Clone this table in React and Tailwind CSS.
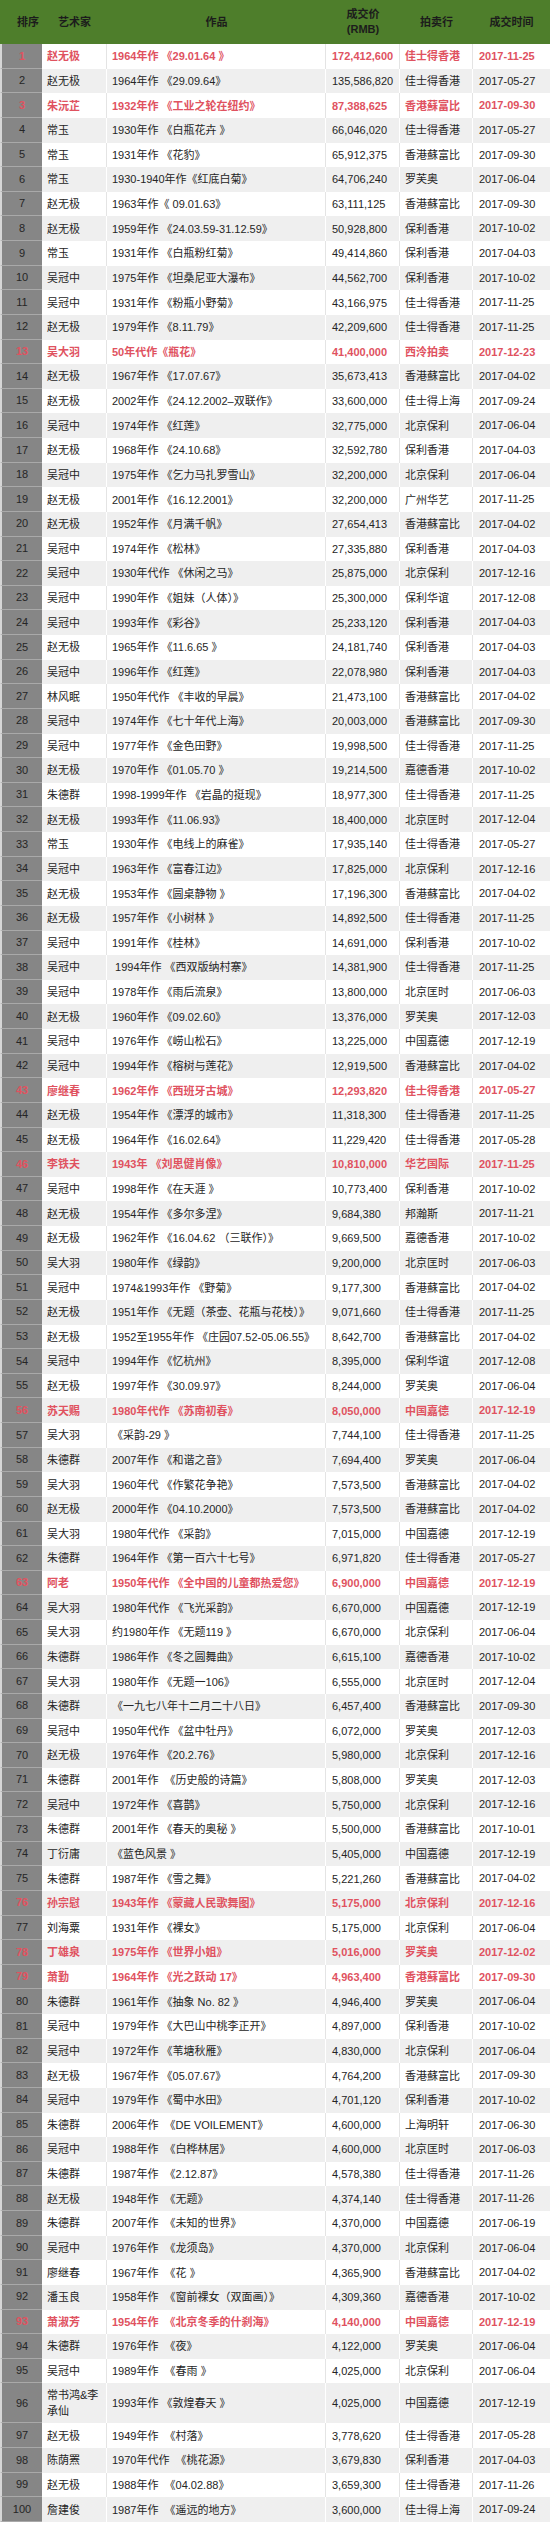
import React from 'react';

const rows = [
  ['赵无极', '1964年作 《29.01.64 》', '172,412,600', '佳士得香港', '2017-11-25', true],
  ['赵无极', '1964年作 《29.09.64》', '135,586,820', '佳士得香港', '2017-05-27'],
  ['朱沅芷', '1932年作 《工业之轮在纽约》', '87,388,625', '香港蘇富比', '2017-09-30', true],
  ['常玉', '1930年作 《白瓶花卉 》', '66,046,020', '佳士得香港', '2017-05-27'],
  ['常玉', '1931年作 《花豹》', '65,912,375', '香港蘇富比', '2017-09-30'],
  ['常玉', '1930-1940年作《红底白菊》', '64,706,240', '罗芙奥', '2017-06-04'],
  ['赵无极', '1963年作《 09.01.63》', '63,111,125', '香港蘇富比', '2017-09-30'],
  ['赵无极', '1959年作 《24.03.59-31.12.59》', '50,928,800', '保利香港', '2017-10-02'],
  ['常玉', '1931年作 《白瓶粉红菊》', '49,414,860', '保利香港', '2017-04-03'],
  ['吴冠中', '1975年作 《坦桑尼亚大瀑布》', '44,562,700', '保利香港', '2017-10-02'],
  ['吴冠中', '1931年作 《粉瓶小野菊》', '43,166,975', '佳士得香港', '2017-11-25'],
  ['赵无极', '1979年作 《8.11.79》', '42,209,600', '佳士得香港', '2017-11-25'],
  ['吴大羽', '50年代作《瓶花》', '41,400,000', '西泠拍卖', '2017-12-23', true],
  ['赵无极', '1967年作 《17.07.67》', '35,673,413', '香港蘇富比', '2017-04-02'],
  ['赵无极', '2002年作 《24.12.2002–双联作》', '33,600,000', '佳士得上海', '2017-09-24'],
  ['吴冠中', '1974年作 《红莲》', '32,775,000', '北京保利', '2017-06-04'],
  ['赵无极', '1968年作 《24.10.68》', '32,592,780', '保利香港', '2017-04-03'],
  ['吴冠中', '1975年作 《乞力马扎罗雪山》', '32,200,000', '北京保利', '2017-06-04'],
  ['赵无极', '2001年作 《16.12.2001》', '32,200,000', '广州华艺', '2017-11-25'],
  ['赵无极', '1952年作 《月满千帆》', '27,654,413', '香港蘇富比', '2017-04-02'],
  ['吴冠中', '1974年作 《松林》', '27,335,880', '保利香港', '2017-04-03'],
  ['吴冠中', '1930年代作 《休闲之马》', '25,875,000', '北京保利', '2017-12-16'],
  ['吴冠中', '1990年作 《姐妹（人体）》', '25,300,000', '保利华谊', '2017-12-08'],
  ['吴冠中', '1993年作 《彩谷》', '25,233,120', '保利香港', '2017-04-03'],
  ['赵无极', '1965年作 《11.6.65 》', '24,181,740', '保利香港', '2017-04-03'],
  ['吴冠中', '1996年作 《红莲》', '22,078,980', '保利香港', '2017-04-03'],
  ['林风眠', '1950年代作 《丰收的早晨》', '21,473,100', '香港蘇富比', '2017-04-02'],
  ['吴冠中', '1974年作 《七十年代上海》', '20,003,000', '香港蘇富比', '2017-09-30'],
  ['吴冠中', '1977年作 《金色田野》', '19,998,500', '佳士得香港', '2017-11-25'],
  ['赵无极', '1970年作 《01.05.70 》', '19,214,500', '嘉德香港', '2017-10-02'],
  ['朱德群', '1998-1999年作 《岩晶的挺现》', '18,977,300', '佳士得香港', '2017-11-25'],
  ['赵无极', '1993年作 《11.06.93》', '18,400,000', '北京匡时', '2017-12-04'],
  ['常玉', '1930年作 《电线上的麻雀》', '17,935,140', '佳士得香港', '2017-05-27'],
  ['吴冠中', '1963年作 《富春江边》', '17,825,000', '北京保利', '2017-12-16'],
  ['赵无极', '1953年作 《圆桌静物 》', '17,196,300', '香港蘇富比', '2017-04-02'],
  ['赵无极', '1957年作 《小树林 》', '14,892,500', '佳士得香港', '2017-11-25'],
  ['吴冠中', '1991年作 《桂林》', '14,691,000', '保利香港', '2017-10-02'],
  ['吴冠中', '\u00a01994年作 《西双版纳村寨》', '14,381,900', '佳士得香港', '2017-11-25'],
  ['吴冠中', '1978年作 《雨后流泉》', '13,800,000', '北京匡时', '2017-06-03'],
  ['赵无极', '1960年作 《09.02.60》', '13,376,000', '罗芙奥', '2017-12-03'],
  ['吴冠中', '1976年作 《崂山松石》', '13,225,000', '中国嘉德', '2017-12-19'],
  ['吴冠中', '1994年作 《榕树与莲花》', '12,919,500', '香港蘇富比', '2017-04-02'],
  ['廖继春', '1962年作 《西班牙古城》', '12,293,820', '佳士得香港', '2017-05-27', true],
  ['赵无极', '1954年作 《漂浮的城市》', '11,318,300', '佳士得香港', '2017-11-25'],
  ['赵无极', '1964年作 《16.02.64》', '11,229,420', '佳士得香港', '2017-05-28'],
  ['李铁夫', '1943年 《刘思健肖像》', '10,810,000', '华艺国际', '2017-11-25', true],
  ['吴冠中', '1998年作 《在天涯 》', '10,773,400', '保利香港', '2017-10-02'],
  ['赵无极', '1954年作 《多尔多涅》', '9,684,380', '邦瀚斯', '2017-11-21'],
  ['赵无极', '1962年作 《16.04.62 （三联作）》', '9,669,500', '嘉德香港', '2017-10-02'],
  ['吴大羽', '1980年作 《绿韵》', '9,200,000', '北京匡时', '2017-06-03'],
  ['吴冠中', '1974&1993年作 《野菊》', '9,177,300', '香港蘇富比', '2017-04-02'],
  ['赵无极', '1951年作 《无题（茶壶、花瓶与花枝）》', '9,071,660', '佳士得香港', '2017-11-25'],
  ['赵无极', '1952至1955年作 《庄园07.52-05.06.55》', '8,642,700', '香港蘇富比', '2017-04-02'],
  ['吴冠中', '1994年作 《忆杭州》', '8,395,000', '保利华谊', '2017-12-08'],
  ['赵无极', '1997年作 《30.09.97》', '8,244,000', '罗芙奥', '2017-06-04'],
  ['苏天赐', '1980年代作 《苏南初春》', '8,050,000', '中国嘉德', '2017-12-19', true],
  ['吴大羽', '《采韵-29 》', '7,744,100', '佳士得香港', '2017-11-25'],
  ['朱德群', '2007年作 《和谐之音》', '7,694,400', '罗芙奥', '2017-06-04'],
  ['吴大羽', '1960年代 《作繁花争艳》', '7,573,500', '香港蘇富比', '2017-04-02'],
  ['赵无极', '2000年作 《04.10.2000》', '7,573,500', '香港蘇富比', '2017-04-02'],
  ['吴大羽', '1980年代作 《采韵》', '7,015,000', '中国嘉德', '2017-12-19'],
  ['朱德群', '1964年作 《第一百六十七号》', '6,971,820', '佳士得香港', '2017-05-27'],
  ['阿老', '1950年代作 《全中国的儿童都热爱您》', '6,900,000', '中国嘉德', '2017-12-19', true],
  ['吴大羽', '1980年代作 《飞光采韵》', '6,670,000', '中国嘉德', '2017-12-19'],
  ['吴大羽', '约1980年作 《无题119 》', '6,670,000', '北京保利', '2017-06-04'],
  ['朱德群', '1986年作 《冬之圆舞曲》', '6,615,100', '嘉德香港', '2017-10-02'],
  ['吴大羽', '1980年作 《无题一106》', '6,555,000', '北京匡时', '2017-12-04'],
  ['朱德群', '《一九七八年十二月二十八日》', '6,457,400', '香港蘇富比', '2017-09-30'],
  ['吴冠中', '1950年代作 《盆中牡丹》', '6,072,000', '罗芙奥', '2017-12-03'],
  ['赵无极', '1976年作 《20.2.76》', '5,980,000', '北京保利', '2017-12-16'],
  ['朱德群', '2001年作 \u00a0《历史般的诗篇》', '5,808,000', '罗芙奥', '2017-12-03'],
  ['吴冠中', '1972年作 《喜鹊》', '5,750,000', '北京保利', '2017-12-16'],
  ['朱德群', '2001年作 《春天的奥秘 》', '5,500,000', '香港蘇富比', '2017-10-01'],
  ['丁衍庸', '《蓝色风景 》', '5,405,000', '中国嘉德', '2017-12-19'],
  ['朱德群', '1987年作 《雪之舞》', '5,221,260', '香港蘇富比', '2017-04-02'],
  ['孙宗慰', '1943年作 《蒙藏人民歌舞图》', '5,175,000', '北京保利', '2017-12-16', true],
  ['刘海粟', '1931年作 《裸女》', '5,175,000', '北京保利', '2017-06-04'],
  ['丁雄泉', '1975年作 《世界小姐》', '5,016,000', '罗芙奥', '2017-12-02', true],
  ['萧勤', '1964年作 《光之跃动 17》', '4,963,400', '香港蘇富比', '2017-09-30', true],
  ['朱德群', '1961年作 《抽象 No. 82 》', '4,946,400', '罗芙奥', '2017-06-04'],
  ['吴冠中', '1979年作 《大巴山中桃李正开》', '4,897,000', '保利香港', '2017-10-02'],
  ['吴冠中', '1972年作 《苇塘秋雁》', '4,830,000', '北京保利', '2017-06-04'],
  ['赵无极', '1967年作 《05.07.67》', '4,764,200', '香港蘇富比', '2017-09-30'],
  ['吴冠中', '1979年作 《蜀中水田》', '4,701,120', '保利香港', '2017-10-02'],
  ['朱德群', '2006年作 \u00a0《DE VOILEMENT》', '4,600,000', '上海明轩', '2017-06-30'],
  ['吴冠中', '1988年作 \u00a0《白桦林居》', '4,600,000', '北京匡时', '2017-06-03'],
  ['朱德群', '1987年作 \u00a0《2.12.87》', '4,578,380', '佳士得香港', '2017-11-26'],
  ['赵无极', '1948年作 \u00a0《无题》', '4,374,140', '佳士得香港', '2017-11-26'],
  ['朱德群', '2007年作 \u00a0《未知的世界》', '4,370,000', '中国嘉德', '2017-06-19'],
  ['吴冠中', '1976年作 \u00a0《龙须岛》', '4,370,000', '北京保利', '2017-06-04'],
  ['廖继春', '1967年作 \u00a0《花 》', '4,365,900', '香港蘇富比', '2017-04-02'],
  ['潘玉良', '1958年作 \u00a0《窗前裸女（双面画）》', '4,309,360', '嘉德香港', '2017-10-02'],
  ['萧淑芳', '1954年作 \u00a0《北京冬季的什刹海》', '4,140,000', '中国嘉德', '2017-12-19', true],
  ['朱德群', '1976年作 \u00a0《夜》', '4,122,000', '罗芙奥', '2017-06-04'],
  ['吴冠中', '1989年作 \u00a0《春雨 》', '4,025,000', '北京保利', '2017-06-04'],
  ['常书鸿&李承仙', '1993年作 《敦煌春天 》', '4,025,000', '中国嘉德', '2017-12-19'],
  ['赵无极', '1949年作 \u00a0《村落》', '3,778,620', '佳士得香港', '2017-05-28'],
  ['陈荫罴', '1970年代作 \u00a0《桃花源》', '3,679,830', '保利香港', '2017-04-03'],
  ['赵无极', '1988年作 \u00a0《04.02.88》', '3,659,300', '佳士得香港', '2017-11-26'],
  ['詹建俊', '1987年作 \u00a0《遥远的地方》', '3,600,000', '佳士得上海', '2017-09-24'],
];

const cols = 'grid grid-cols-[42px_65px_219px_74px_73px_77px]';

function Row({ index, row }) {
  const [artist, work, price, house, date, red] = row;
  const even = index % 2 === 1;
  const bg = even ? 'bg-[#efefef]' : 'bg-white';
  const line = even ? 'border-white' : 'border-[#e4e4e4]';
  const text = red ? 'text-[#e0525f] font-bold' : 'text-[#252525]';
  const cell = `flex items-center border-r ${line} py-[4px] leading-[16px]`;

  return (
    <div className={`${cols} min-h-[24.63px] ${bg} ${text}`}>
      <div className="flex items-center justify-center bg-[#868686] border-l-2 border-l-[#d6d6d6] border-b border-b-[#a9a9a9]">
        {index + 1}
      </div>
      <div className={`${cell} pl-[5px] pr-[4px]`}>{artist}</div>
      <div className={`${cell} pl-[5px] whitespace-nowrap`}>{work}</div>
      <div className={`${cell} pl-[6px] whitespace-nowrap`}>{price}</div>
      <div className={`${cell} pl-[5px] whitespace-nowrap`}>{house}</div>
      <div className="flex items-center pl-[6px] whitespace-nowrap">{date}</div>
    </div>
  );
}

export default function App() {
  return (
    <div
      className="w-[550px] bg-white text-[11px]"
      style={{ fontFamily: '"Liberation Sans", "Noto Sans CJK SC", sans-serif' }}
    >
      <div className={`${cols} h-[44px] bg-[#4e7e2b] text-[#1c1c1c] font-bold leading-[15px]`}>
        <div className="flex items-center justify-center pl-[14px]">排序</div>
        <div className="flex items-center justify-center">艺术家</div>
        <div className="flex items-center justify-center">作品</div>
        <div className="flex flex-col items-center justify-center">
          <span>成交价</span>
          <span>(RMB)</span>
        </div>
        <div className="flex items-center justify-center">拍卖行</div>
        <div className="flex items-center justify-center">成交时间</div>
      </div>
      {rows.map((row, i) => (
        <Row key={i} index={i} row={row} />
      ))}
    </div>
  );
}
